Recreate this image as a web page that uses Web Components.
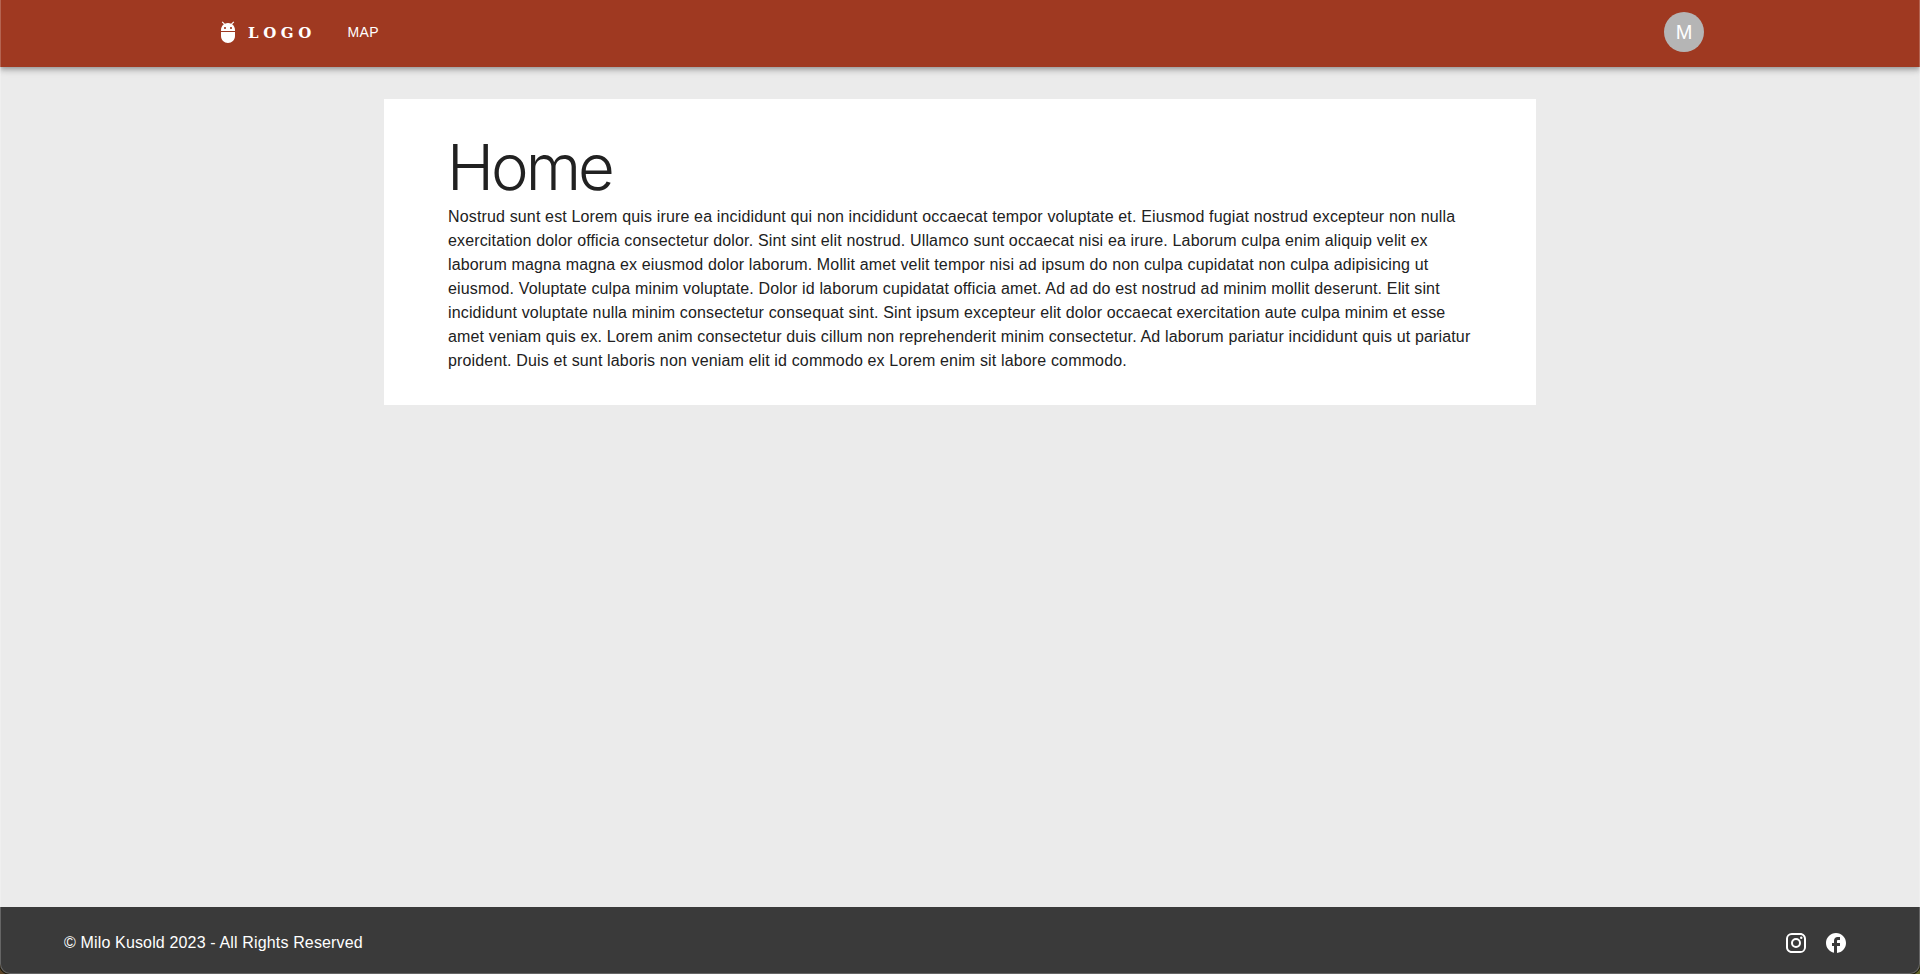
<!DOCTYPE html>
<html lang="en">
<head>
<meta charset="utf-8">
<title>Home</title>
<style>
html,body{height:100%}
body{margin:0;overflow:hidden;background:#ebebeb;color:#212121;font:16px/24px "Liberation Sans",Arial,sans-serif;letter-spacing:.15px}
</style>
</head>
<body>
<app-shell>
  <app-header slot="header">
    <brand-logo>LOGO</brand-logo>
    <nav-link>MAP</nav-link>
    <user-avatar slot="end">M</user-avatar>
  </app-header>
  <content-card heading="Home">Nostrud sunt est Lorem quis irure ea incididunt qui non incididunt occaecat tempor voluptate et. Eiusmod fugiat nostrud excepteur non nulla<br>exercitation dolor officia consectetur dolor. Sint sint elit nostrud. Ullamco sunt occaecat nisi ea irure. Laborum culpa enim aliquip velit ex<br>laborum magna magna ex eiusmod dolor laborum. Mollit amet velit tempor nisi ad ipsum do non culpa cupidatat non culpa adipisicing ut<br>eiusmod. Voluptate culpa minim voluptate. Dolor id laborum cupidatat officia amet. Ad ad do est nostrud ad minim mollit deserunt. Elit sint<br>incididunt voluptate nulla minim consectetur consequat sint. Sint ipsum excepteur elit dolor occaecat exercitation aute culpa minim et esse<br>amet veniam quis ex. Lorem anim consectetur duis cillum non reprehenderit minim consectetur. Ad laborum pariatur incididunt quis ut pariatur<br>proident. Duis et sunt laboris non veniam elit id commodo ex Lorem enim sit labore commodo.</content-card>
  <app-footer slot="footer">© Milo Kusold 2023 - All Rights Reserved
    <social-icon slot="social" name="instagram"></social-icon>
    <social-icon slot="social" name="facebook"></social-icon>
  </app-footer>
</app-shell>
<script>
const define = (name, html, setup) => customElements.define(name, class extends HTMLElement {
  constructor() {
    super();
    const t = document.createElement('template');
    t.innerHTML = html;
    this.attachShadow({ mode: 'open' }).append(t.content.cloneNode(true));
  }
  connectedCallback() { if (setup) setup(this, this.shadowRoot); }
});

define('app-shell', `
<style>
:host{display:flex;flex-direction:column;height:100vh;position:relative;overflow:hidden;background:#ebebeb}
main{flex:1;padding:32px 384px}
.edge{position:absolute;inset:0;pointer-events:none;z-index:5;overflow:hidden}
.edge i{position:absolute;inset:-20px 0 0;border-radius:0 0 10px 10px;box-shadow:inset 0 0 0 1px rgba(255,255,255,.22),0 0 0 1px #1d1b12,-10px 10px #5c4426,10px 10px #66682a}
</style>
<slot name="header"></slot><main><slot></slot></main><slot name="footer"></slot><div class="edge"><i></i></div>`);

define('app-header', `
<style>
:host{display:block;height:67px;background:#9f3921;color:#fff;position:relative;z-index:1;
box-shadow:0 2px 4px -1px rgba(0,0,0,.2),0 4px 5px rgba(0,0,0,.14),0 1px 10px rgba(0,0,0,.12)}
div{display:flex;align-items:center;height:64px;margin:0 192px;padding:0 24px}
.start{display:flex;align-items:center;gap:32px;flex:1;padding:0;margin:0}
</style>
<div><div class="start"><slot></slot></div><slot name="end"></slot></div>`);

define('brand-logo', `
<style>
:host{display:flex;align-items:center;gap:8px;width:99.5px}
svg{width:24px;height:24px;fill:#fff;flex:none}
span{font:bold 15px/32px "DejaVu Serif",serif;letter-spacing:4.6px;padding-top:1px}
</style>
<svg viewBox="0 0 24 24"><path d="M5 16c0 3.87 3.13 7 7 7s7-3.13 7-7v-4H5v4zM16.12 4.37l2.1-2.1-.82-.83-2.3 2.31C14.16 3.28 13.12 3 12 3s-2.16.28-3.09.75L6.6 1.44l-.82.83 2.1 2.1C6.14 5.64 5 7.68 5 10v1h14v-1c0-2.32-1.14-4.36-2.88-5.63zM9 9c-.55 0-1-.45-1-1s.45-1 1-1 1 .45 1 1-.45 1-1 1zm6 0c-.55 0-1-.45-1-1s.45-1 1-1 1 .45 1 1-.45 1-1 1z"/></svg><span><slot></slot></span>`);

define('nav-link', `
<style>:host{display:block;font-size:14px;line-height:24px;letter-spacing:.4px}</style><slot></slot>`);

define('user-avatar', `
<style>
:host{display:flex;align-items:center;justify-content:center;width:40px;height:40px;border-radius:50%;background:#b5b5b5;color:#fff;font-size:20px;line-height:20px;letter-spacing:0}
</style><slot></slot>`);

define('content-card', `
<style>
:host{display:block;background:#fff;padding:32px 64px;height:242px}
h1{margin:0 0 3px;height:71px;font:300 63.5px/71px Inter,"Liberation Sans",sans-serif;letter-spacing:-3px;text-indent:-1px}
p{margin:0;white-space:nowrap}
</style><h1></h1><p><slot></slot></p>`, (el, root) => {
  root.querySelector('h1').textContent = el.getAttribute('heading');
});

define('app-footer', `
<style>
:host{display:flex;justify-content:space-between;align-items:center;box-sizing:border-box;height:67px;padding:5px 72px 0 64px;background:#3a3a3a;color:#fff}
div{display:flex;gap:16px}
</style><span><slot></slot></span><div><slot name="social"></slot></div>`);

const icons = {
  instagram: 'M7.8 2h8.4C19.4 2 22 4.6 22 7.8v8.4a5.8 5.8 0 0 1-5.8 5.8H7.8C4.6 22 2 19.4 2 16.2V7.8A5.8 5.8 0 0 1 7.8 2m-.2 2A3.6 3.6 0 0 0 4 7.6v8.8C4 18.39 5.61 20 7.6 20h8.8a3.6 3.6 0 0 0 3.6-3.6V7.6C20 5.61 18.39 4 16.4 4H7.6m9.65 1.5a1.25 1.25 0 0 1 1.25 1.25A1.25 1.25 0 0 1 17.25 8 1.25 1.25 0 0 1 16 6.75a1.25 1.25 0 0 1 1.25-1.25M12 7a5 5 0 0 1 5 5 5 5 0 0 1-5 5 5 5 0 0 1-5-5 5 5 0 0 1 5-5m0 2a3 3 0 0 0-3 3 3 3 0 0 0 3 3 3 3 0 0 0 3-3 3 3 0 0 0-3-3z',
  facebook: 'M22 12c0-5.52-4.48-10-10-10S2 6.48 2 12c0 4.84 3.44 8.87 8 9.8V15H8v-3h2V9.5C10 7.57 11.57 6 13.5 6H16v3h-2c-.55 0-1 .45-1 1v2h3v3h-3v6.95c5.05-.5 9-4.76 9-9.95z'
};
define('social-icon', `
<style>:host{display:block;width:24px;height:24px}svg{display:block;fill:#fff}</style>
<svg width="24" height="24" viewBox="0 0 24 24"><path/></svg>`, (el, root) => {
  root.querySelector('path').setAttribute('d', icons[el.getAttribute('name')]);
});
</script>
</body>
</html>
